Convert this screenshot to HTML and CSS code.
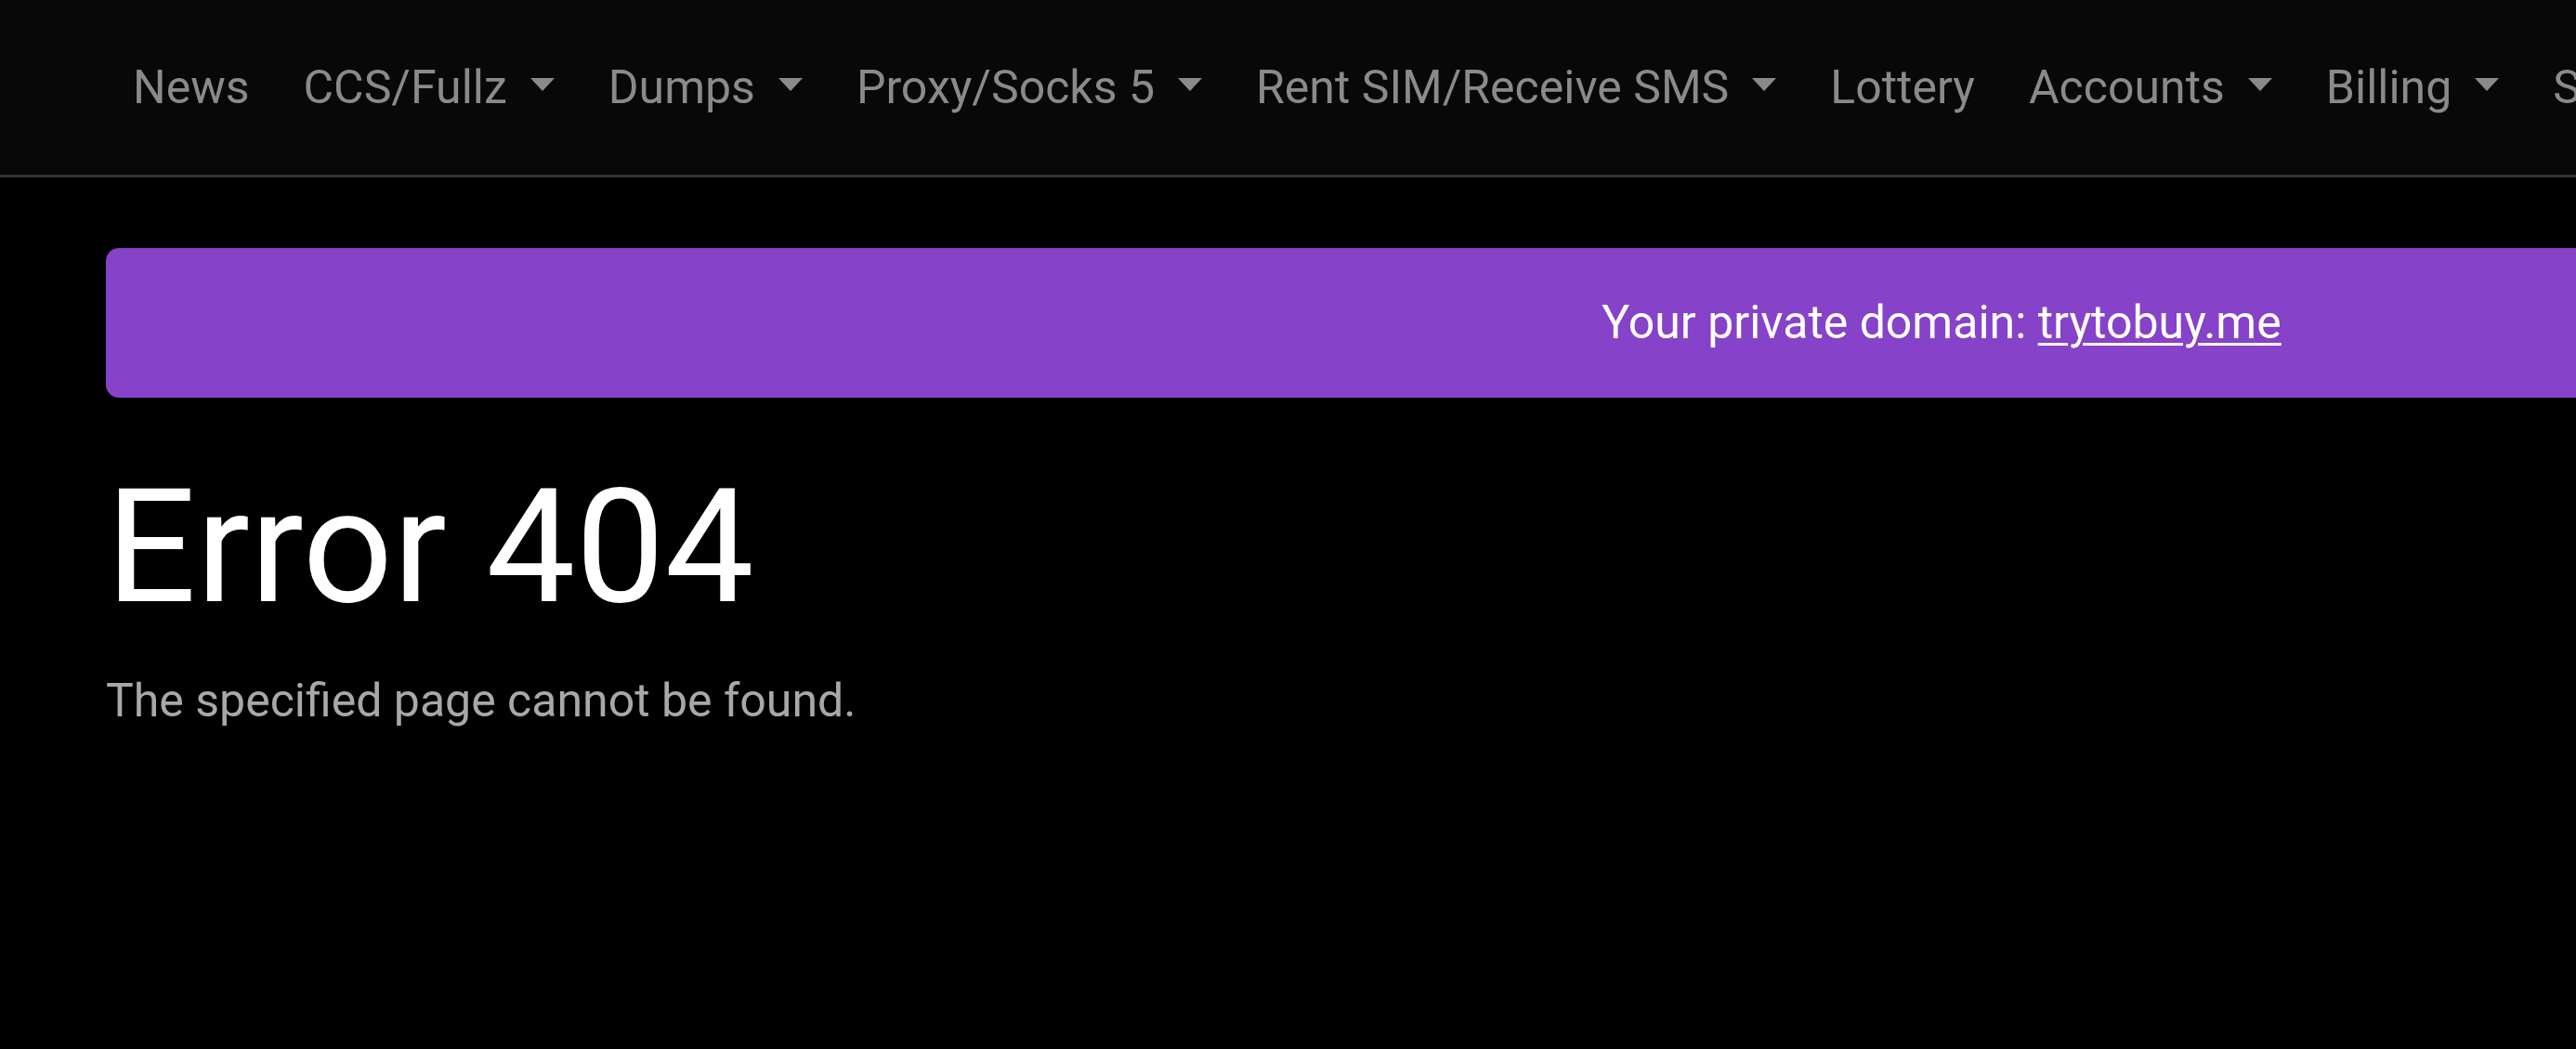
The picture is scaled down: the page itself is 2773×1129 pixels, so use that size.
FILE: index.html
```html
<!DOCTYPE html>
<html lang="en">
<head>
<meta charset="utf-8">
<title>Error 404</title>
<link rel="stylesheet" href="styles.css">
</head>
<body>
<header class="navbar">
  <ul class="nav">
    <li><a class="nav-link" href="#">News</a></li>
    <li><a class="nav-link" href="#">CCS/Fullz<span class="caret"></span></a></li>
    <li><a class="nav-link" href="#">Dumps<span class="caret"></span></a></li>
    <li><a class="nav-link" href="#">Proxy/Socks 5<span class="caret"></span></a></li>
    <li><a class="nav-link" href="#">Rent SIM/Receive SMS<span class="caret"></span></a></li>
    <li><a class="nav-link" href="#">Lottery</a></li>
    <li><a class="nav-link" href="#">Accounts<span class="caret"></span></a></li>
    <li><a class="nav-link" href="#">Billing<span class="caret"></span></a></li>
    <li><a class="nav-link" href="#">Support<span class="caret"></span></a></li>
  </ul>
</header>
<main class="main">
  <div class="alert">Your private domain:&nbsp;<a class="alert-link" href="#">trytobuy.me</a></div>
  <h1 class="title">Error 404</h1>
  <p class="lead">The specified page cannot be found.</p>
</main>
</body>
</html>
```

FILE: styles.css
```css
html, body {
  margin: 0;
  padding: 0;
  background: #000;
  overflow: hidden;
}
body {
  font-family: Roboto, "Liberation Sans", Arial, sans-serif;
  color: #fff;
  width: 4180px;
  height: 1129px;
}
.navbar {
  height: 187px;
  background: #080808;
  border-bottom: 3px solid #333333;
  display: flex;
  align-items: center;
  padding: 0 114px 1px;
  box-sizing: content-box;
}
.nav {
  list-style: none;
  margin: 0;
  padding: 0;
  display: flex;
  white-space: nowrap;
}
.nav-link {
  display: flex;
  align-items: center;
  padding: 0 29px;
  font-size: 50px;
  line-height: normal;
  color: #8a8a8a;
  text-decoration: none;
}
.caret {
  display: block;
  width: 0;
  height: 0;
  margin-left: 25px;
  margin-bottom: 5px;
  border-top: 14px solid #8a8a8a;
  border-left: 13.5px solid transparent;
  border-right: 13.5px solid transparent;
}
.main {
  padding: 76px 114px 0;
}
.alert {
  height: 161px;
  background: #8642c8;
  border-radius: 14px;
  display: flex;
  align-items: center;
  justify-content: center;
  font-size: 50px;
  line-height: normal;
  color: #fff;
  padding-bottom: 1px;
  box-sizing: border-box;
}
.alert-link {
  color: #fff;
  text-decoration: underline;
  text-decoration-thickness: 3px;
  text-underline-offset: 5px;
}
.title {
  margin: 60px 0 0;
  font-size: 171px;
  font-weight: 400;
  line-height: normal;
  color: #fff;
}
.lead {
  margin: 36px 0 0;
  font-size: 50px;
  line-height: normal;
  color: #a8a8a8;
}
```
